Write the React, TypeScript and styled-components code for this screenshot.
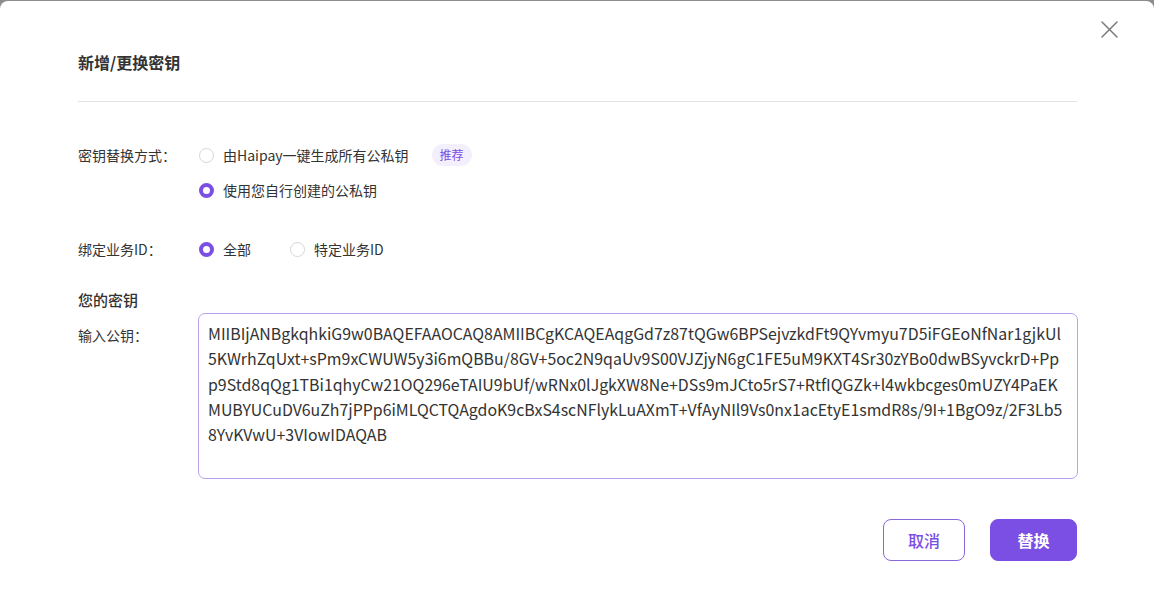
import styled, { createGlobalStyle } from "styled-components";

const PURPLE = "#7b4fe3";

const GlobalStyle = createGlobalStyle`
  html, body {
    margin: 0;
    padding: 0;
    background: #8d8d8d;
    font-family: "Noto Sans CJK SC", "Noto Sans", sans-serif;
    color: #333;
  }
  * { box-sizing: border-box; }
`;

const Modal = styled.div`
  position: relative;
  margin-top: 1px;
  width: 1154px;
  min-height: 620px;
  background: #fff;
  border-radius: 8px;
  padding: 0 77px 0 78px;
`;

const CloseButton = styled.button`
  position: absolute;
  top: 19px;
  right: 36px;
  width: 18px;
  height: 18px;
  padding: 0;
  border: none;
  background: none;
  cursor: pointer;
  display: flex;
  align-items: center;
  justify-content: center;
`;

const Header = styled.div`
  padding-top: 50px;
  padding-bottom: 28px;
  border-bottom: 1px solid #e3e3e3;
`;

const Title = styled.h2`
  margin: 0;
  font-size: 16px;
  line-height: 22px;
  font-weight: 700;
  color: #333;
`;

const Body = styled.div`
  padding-top: 42px;
`;

const FormRow = styled.div<{ $mb?: number }>`
  display: grid;
  grid-template-columns: 121px 1fr;
  align-items: start;
  margin-bottom: ${(p) => p.$mb ?? 0}px;
`;

const Label = styled.div`
  font-size: 14px;
  line-height: 22px;
  color: #333;
`;

const RadioColumn = styled.div`
  display: flex;
  flex-direction: column;
  gap: 13px;
`;

const RadioLine = styled.div`
  display: flex;
  align-items: center;
  gap: 39px;
  height: 22px;
`;

const RadioItem = styled.label`
  display: flex;
  align-items: center;
  gap: 9px;
  font-size: 14px;
  line-height: 22px;
  color: #333;
  cursor: pointer;
`;

const RadioDot = styled.span<{ $checked?: boolean }>`
  width: 15px;
  height: 15px;
  border-radius: 50%;
  background: #fff;
  border: ${(p) => (p.$checked ? `4.5px solid ${PURPLE}` : "1px solid #d6d6d6")};
  flex-shrink: 0;
`;

const Badge = styled.span`
  margin-left: 14px;
  padding: 0 8px;
  height: 22px;
  line-height: 22px;
  border-radius: 11px;
  background: #f3effd;
  color: ${PURPLE};
  font-size: 12px;
`;

const SectionTitle = styled.div`
  font-size: 15px;
  line-height: 22px;
  font-weight: 500;
  color: #333;
  margin-bottom: 2px;
`;

const KeyLabel = styled(Label)`
  padding-top: 11px;
`;

const KeyInput = styled.textarea`
  width: 880px;
  height: 166px;
  margin-left: -1px;
  padding: 7px 9px;
  border: 1px solid #b9a2ec;
  border-radius: 7px;
  outline: none;
  resize: none;
  font-family: "Noto Sans CJK SC", "Noto Sans", sans-serif;
  font-size: 15.9px;
  line-height: 25.3px;
  color: #333;
  word-break: break-all;
  caret-color: #222;
`;

const Footer = styled.div`
  display: flex;
  justify-content: flex-end;
  gap: 25px;
  margin-top: 40px;
`;

const Button = styled.button<{ $primary?: boolean }>`
  height: 42px;
  padding: 0;
  width: ${(p) => (p.$primary ? 87 : 82)}px;
  border-radius: 8px;
  border: 1px solid ${(p) => (p.$primary ? PURPLE : "#8a68d9")};
  background: ${(p) => (p.$primary ? PURPLE : "#fff")};
  color: ${(p) => (p.$primary ? "#fff" : PURPLE)};
  font-family: "Noto Sans CJK SC", "Noto Sans", sans-serif;
  font-size: 16px;
  font-weight: ${(p) => (p.$primary ? 700 : 500)};
  cursor: pointer;
`;

const PUBLIC_KEY =
  "MIIBIjANBgkqhkiG9w0BAQEFAAOCAQ8AMIIBCgKCAQEAqgGd7z87tQGw6BPSejvzkdFt9QYvmyu7D5iFGEoNfNar1gjkUl" +
  "5KWrhZqUxt+sPm9xCWUW5y3i6mQBBu/8GV+5oc2N9qaUv9S00VJZjyN6gC1FE5uM9KXT4Sr30zYBo0dwBSyvckrD+Pp" +
  "p9Std8qQg1TBi1qhyCw21OQ296eTAIU9bUf/wRNx0lJgkXW8Ne+DSs9mJCto5rS7+RtfIQGZk+l4wkbcges0mUZY4PaEK" +
  "MUBYUCuDV6uZh7jPPp6iMLQCTQAgdoK9cBxS4scNFlykLuAXmT+VfAyNIl9Vs0nx1acEtyE1smdR8s/9I+1BgO9z/2F3Lb5" +
  "8YvKVwU+3VIowIDAQAB";

const App = () => {
  return (
    <>
      <GlobalStyle />
      <Modal>
        <CloseButton aria-label="关闭">
          <svg width="17" height="17" viewBox="0 0 17 17">
            <path d="M1 1L16 16M16 1L1 16" stroke="#7a7a7a" strokeWidth="1.5" strokeLinecap="round" />
          </svg>
        </CloseButton>
        <Header>
          <Title>新增/更换密钥</Title>
        </Header>
        <Body>
          <FormRow $mb={37}>
            <Label>密钥替换方式：</Label>
            <RadioColumn>
              <RadioLine>
                <RadioItem>
                  <RadioDot />
                  由Haipay一键生成所有公私钥
                  <Badge>推荐</Badge>
                </RadioItem>
              </RadioLine>
              <RadioLine>
                <RadioItem>
                  <RadioDot $checked />
                  使用您自行创建的公私钥
                </RadioItem>
              </RadioLine>
            </RadioColumn>
          </FormRow>
          <FormRow $mb={29}>
            <Label>绑定业务ID：</Label>
            <RadioLine>
              <RadioItem>
                <RadioDot $checked />
                全部
              </RadioItem>
              <RadioItem>
                <RadioDot />
                特定业务ID
              </RadioItem>
            </RadioLine>
          </FormRow>
          <SectionTitle>您的密钥</SectionTitle>
          <FormRow>
            <KeyLabel>输入公钥：</KeyLabel>
            <KeyInput defaultValue={PUBLIC_KEY} spellCheck={false} />
          </FormRow>
          <Footer>
            <Button>取消</Button>
            <Button $primary>替换</Button>
          </Footer>
        </Body>
      </Modal>
    </>
  );
};

export default App;
